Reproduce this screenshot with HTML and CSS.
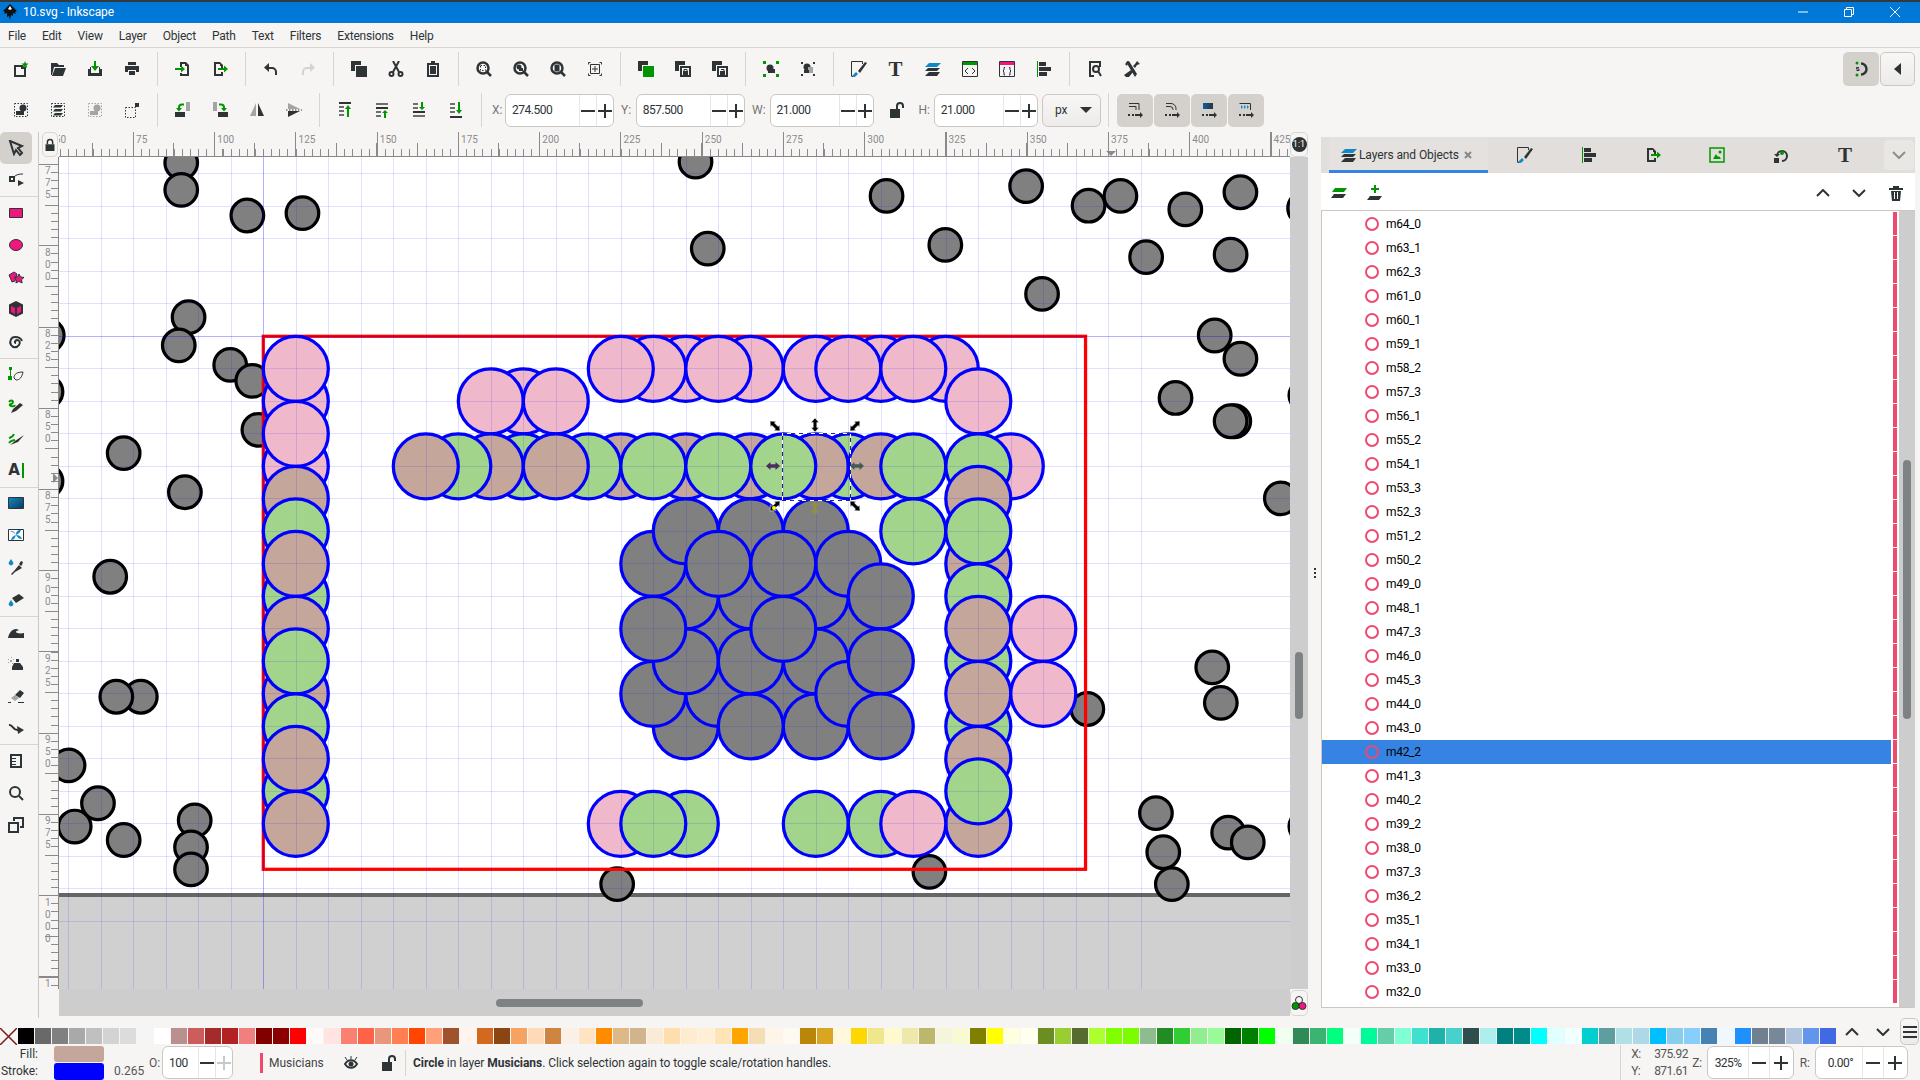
FILE: index.html
```html
<!DOCTYPE html>
<html lang="en">
<head>
  <meta charset="UTF-8" />
  <title>10.svg - Inkscape</title>
  <link rel="stylesheet" href="styles.css">
</head>
<body>
  <header class="titlebar">
    <svg class="app-logo" viewBox="0 0 16 16"><path d="M8 0 15 7l-2 1 1 2-3-1v3l-2-1-1 5-1-4-2 1V9L2 10l1-2-2-1z"/><path class="white" d="M8 2 6 5l2 1 2-1z"/></svg>
    <span class="app-title">10.svg - Inkscape</span>
    <div class="win-btns">
      <svg viewBox="0 0 12 12"><path class="win" d="M1 6h10"/></svg>
      <svg viewBox="0 0 12 12"><path class="win" d="M1.500 3.500h7v7h-7zM3.500 3.500v-2h7v7h-2"/></svg>
      <svg viewBox="0 0 12 12"><path class="win" d="M1 1l10 10M11 1 1 11"/></svg>
    </div>
  </header>

  <nav class="menubar">
    <span>File</span><span>Edit</span><span>View</span><span>Layer</span><span>Object</span><span>Path</span><span>Text</span><span>Filters</span><span>Extensions</span><span>Help</span>
  </nav>

  <section class="toolrows">
    <div class="toolrows-left">
      <div class="toolbar toolbar-main">
        <div class="btn"><svg viewBox="0 0 16 16"><path class="ol" d="M2 5h7v2h3v8H2z"/><path class="gr" d="M12 0l1 2.400 2.600.2-2 1.700.7 2.600-2.300-1.400-2.300 1.400.7-2.600-2-1.700 2.600-.2z"/></svg></div>
        <div class="btn"><svg viewBox="0 0 16 16"><path d="M1 2h6l2 2h5v2H4l-2 8H1z"/><path d="M5 7h11l-3 8H2z"/></svg></div>
        <div class="btn"><svg viewBox="0 0 16 16"><path d="M1 8h3v4h8V8h3v7H1zM3 6h1v2H3zM12 6h1v2h-1z"/><path class="gr" d="M7 0h2v5h3L8 10 4 5h3z"/></svg></div>
        <div class="btn"><svg viewBox="0 0 16 16"><path d="M4 1h8v3H4zM1 5h14v6h-3V9H4v2H1zM5 10h6v4H5z"/></svg></div>
        <i class="sep"></i>
        <div class="btn"><svg viewBox="0 0 16 16"><path d="M5 1h6l3 3v11H5v-3h2v1h5V5h-2V3H7v3H5z"/><path class="gr" d="M0 7h6V4.500L10 8l-4 3.500V9H0z"/></svg></div>
        <div class="btn"><svg viewBox="0 0 16 16"><path d="M2 1h6l3 3v3H9V5H8V3H4v10h5v-2h2v4H2z"/><path class="gr" d="M6 7h6V4.500L16 8l-4 3.500V9H6z"/></svg></div>
        <i class="sep"></i>
        <div class="btn"><svg viewBox="0 0 16 16"><path d="M6 2 1 6.500 6 11V8h3a3 3 0 0 1 3 3v3h2v-3a5 5 0 0 0-5-5H6z"/></svg></div>
        <div class="btn"><svg viewBox="0 0 16 16"><path class="off" d="M10 2l5 4.500L10 11V8H7a3 3 0 0 0-3 3v3H2v-3a5 5 0 0 1 5-5h3z"/></svg></div>
        <i class="sep"></i>
        <div class="btn"><svg viewBox="0 0 16 16"><path d="M0 0h10v4H4v6H0z"/><path d="M5 5h11v11H5z"/></svg></div>
        <div class="btn"><svg viewBox="0 0 16 16"><circle class="ol" cx="3.500" cy="13" r="2"/><circle class="ol" cx="12.500" cy="13" r="2"/><path class="ol" d="M5 11 11 0M11 11 5 0"/></svg></div>
        <div class="btn"><svg viewBox="0 0 16 16"><path class="ol" d="M3 3h10v12H3z"/><path d="M6 0h4v3H6zM5 5h6v8H5z"/></svg></div>
        <i class="sep"></i>
        <div class="btn"><svg viewBox="0 0 16 16"><circle class="ol3" cx="7" cy="7" r="5.500"/><path class="ol3" d="M11 11l4 4"/><path class="dot" d="M4.500 4.500h5v5h-5z"/></svg></div>
        <div class="btn"><svg viewBox="0 0 16 16"><circle class="ol3" cx="7" cy="7" r="5.500"/><path class="ol3" d="M11 11l4 4"/><circle cx="6" cy="6" r="2.500"/><path d="M6 7h4v3H6z"/></svg></div>
        <div class="btn"><svg viewBox="0 0 16 16"><circle class="ol3" cx="7" cy="7" r="5.500"/><path class="ol3" d="M11 11l4 4"/><path d="M4.500 3.500h5v7h-5z"/></svg></div>
        <div class="btn"><svg viewBox="0 0 16 16"><path class="ol1" d="M1.500 3.500v-2h2M12.500 1.500h2v2M14.500 12.500v2h-2M3.500 14.500h-2v-2M3.500 3.500h9v9h-9zM8 5v6M5 8h6"/></svg></div>
        <i class="sep"></i>
        <div class="btn"><svg viewBox="0 0 16 16"><path d="M0 0h10v4H4v6H0z"/><path class="gr" d="M5 5h11v11H5z"/></svg></div>
        <div class="btn"><svg viewBox="0 0 16 16"><path d="M0 0h10v4H4v6H0z"/><path class="ol" d="M6 6h9v9H6z"/><path d="M8 10h5v4H8z"/><path class="ol1" d="M9 10V8.500h3V10"/></svg></div>
        <div class="btn"><svg viewBox="0 0 16 16"><path d="M0 0h10v4H4v6H0z"/><path class="ol" d="M6 6h9v9H6z"/><path d="M8 10h5v4H8z"/><path class="ol1" d="M12 10V8.500H9"/></svg></div>
        <i class="sep"></i>
        <div class="btn"><svg viewBox="0 0 16 16"><path class="gr" d="M0 0h3v3H0zM13 0h3v3h-3zM0 13h3v3H0zM13 13h3v3h-3z"/><circle cx="7" cy="7" r="3.500"/><path d="M5 8h7v4H5z"/></svg></div>
        <div class="btn"><svg viewBox="0 0 16 16"><path d="M1 1h2v2H1zM13 1h2v2h-2zM1 13h2v2H1zM13 13h2v2h-2z"/><circle cx="7" cy="6" r="3.500"/><path class="gy" d="M8 6h5v6H8z"/><path d="M4 9h5v3H4z"/></svg></div>
        <i class="sep"></i>
        <div class="btn"><svg viewBox="0 0 16 16"><path class="ol1" d="M.500 15V.500h11V3M.500 15.500h2"/><path class="bl" d="M5 11l2 2-3 3-3-1z"/><path d="M7 10l7-9 2 1-7 10z"/></svg></div>
        <div class="btn"><span class="glyph-t">T</span></div>
        <div class="btn"><svg viewBox="0 0 16 16"><path class="bl" d="M4 2h12l-4 4H0z"/><path d="M3 7h12l-3 3H0z"/><path d="M4 11h11l-3 4H0z"/></svg></div>
        <div class="btn"><svg viewBox="0 0 16 16"><path class="ol1" d="M.500.500h15v15H.500z"/><path class="gr" d="M1 1h14v3H1z"/><path class="ol1" d="M6 7 3 10l3 3M10 7l3 3-3 3"/></svg></div>
        <div class="btn"><svg viewBox="0 0 16 16"><path class="ol1" d="M.500.500h15v15H.500z"/><path class="pk" d="M1 1h14v3H1z"/><path class="ol1" d="M6 6.500H5V9l-1 1 1 1v3h1M10 6.500h1V9l1 1-1 1v3h-1"/></svg></div>
        <div class="btn"><svg viewBox="0 0 16 16"><path class="gr" d="M1 0h1v16H1z"/><path d="M3 1h7v4H3zM3 6h12v4H3zM3 11h8v4H3z"/></svg></div>
        <i class="sep"></i>
        <div class="btn"><svg viewBox="0 0 16 16"><path class="ol" d="M13 6V1H3v14h4"/><circle class="ol" cx="9" cy="8" r="3"/><path class="ol" d="M11 10l3 5"/></svg></div>
        <div class="btn"><svg viewBox="0 0 16 16"><path d="M2 1 5 0l8 13-2 3zM1 3l3-3-1 5z"/><path d="M13 0l3 3-3 1-2 3-2-2 2-2zM7 9l2 2-4 5H2l-2-2z"/></svg></div>
      </div>

      <div class="toolbar toolbar-props">
        <div class="btn"><svg viewBox="0 0 16 16"><path class="dot" d="M1.500 1.500h13v13h-13z"/><circle cx="10" cy="6" r="3.500"/><path d="M3 9h8v4H3z"/></svg></div>
        <div class="btn"><svg viewBox="0 0 16 16"><path class="dot" d="M1.500 1.500h13v13h-13z"/><path d="M5 3h8l-2 2.500H3zM5 7h8l-2 2.500H3zM5 11h8l-2 2.500H3z"/></svg></div>
        <div class="btn"><svg viewBox="0 0 16 16"><path class="dot gyln" d="M1.500 1.500h13v13h-13z"/><circle class="gy" cx="10" cy="6" r="3.500"/><path class="gy" d="M3 9h8v4H3z"/></svg></div>
        <div class="btn"><svg viewBox="0 0 16 16"><path class="dot" d="M1.500 5.500h10v10h-10z"/><path d="M11 1h4v4h-4z"/></svg></div>
        <i class="sep"></i>
        <div class="btn"><svg viewBox="0 0 16 16"><path d="M0 10h10v5H0z"/><path class="gy" d="M11 0h4v9h-4z"/><path class="grl" d="M9 2.500H7a3 3 0 0 0-3 3V7"/><path class="gr" d="M1 6h6L4 9.500z"/></svg></div>
        <div class="btn"><svg viewBox="0 0 16 16"><path d="M6 10h10v5H6z"/><path class="gy" d="M1 0h4v9H1z"/><path class="grl" d="M7 2.500h2a3 3 0 0 1 3 3V7"/><path class="gr" d="M15 6H9l3 3.500z"/></svg></div>
        <div class="btn"><svg viewBox="0 0 16 16"><path class="gy" d="M7 1v13H1z"/><path d="M9 1v13h6z"/></svg></div>
        <div class="btn"><svg viewBox="0 0 16 16"><path class="gy" d="M2 1v6h12z"/><path d="M2 9v6l12-6z"/><path class="dot" d="M0 8h16"/></svg></div>
        <i class="sep"></i>
        <div class="btn"><svg viewBox="0 0 16 16"><path d="M2 0h12v2H2z"/><path class="gy2" d="M2 4h5v2H2zM2 8h5v2H2zM2 12h5v2H2z"/><path class="gr" d="M10 15V7H8l3-4 3 4h-2v8z"/></svg></div>
        <div class="btn"><svg viewBox="0 0 16 16"><path class="gy2" d="M2 1h12v2H2z"/><path d="M2 5h12v2H2z"/><path class="gy2" d="M2 9h5v2H2zM2 13h5v2H2z"/><path class="gr" d="M10 16V11H8l3-3 3 3h-2v5z"/></svg></div>
        <div class="btn"><svg viewBox="0 0 16 16"><path class="gy2" d="M2 1h5v2H2zM2 5h5v2H2z"/><path d="M2 9h12v2H2z"/><path class="gy2" d="M2 13h12v2H2z"/><path class="gr" d="M10 0v5H8l3 3 3-3h-2V0z"/></svg></div>
        <div class="btn"><svg viewBox="0 0 16 16"><path class="gy2" d="M2 1h5v2H2zM2 5h5v2H2zM2 9h5v2H2z"/><path d="M2 14h12v2H2z"/><path class="gr" d="M10 0v8H8l3 4 3-4h-2V0z"/></svg></div>
        <i class="sep"></i>
        <label class="field-label field-x">X:</label>
        <div class="spin spin-x"><span class="spin-val">274.500</span><i class="spin-minus"></i><i class="spin-plus"></i></div>
        <label class="field-label field-y">Y:</label>
        <div class="spin spin-y"><span class="spin-val">857.500</span><i class="spin-minus"></i><i class="spin-plus"></i></div>
        <label class="field-label field-w">W:</label>
        <div class="spin spin-w"><span class="spin-val">21.000</span><i class="spin-minus"></i><i class="spin-plus"></i></div>
        <svg class="wh-lock" viewBox="0 0 16 16"><path d="M1 7h10v9H1z"/><path class="ol" d="M8 7V4a3 3 0 0 1 6 0v2"/></svg>
        <label class="field-label field-h">H:</label>
        <div class="spin spin-h"><span class="spin-val">21.000</span><i class="spin-minus"></i><i class="spin-plus"></i></div>
        <div class="unit-select"><span>px</span><svg viewBox="0 0 12 6"><path d="M0 0h12L6 6z"/></svg></div>
        <i class="sep sep-snap"></i>
        <div class="btn-on"><svg viewBox="0 0 16 16"><path class="ol1" d="M2 1.500h10V8M2 4.500h7V8"/><path d="M1 12h2v2H1zM5 12h2v2H5zM8 12h5v-2l3 3-3 3v-2H8z"/></svg></div>
        <div class="btn-on"><svg viewBox="0 0 16 16"><path class="ol1" d="M2 1.500h5a5 5 0 0 1 5 5V8M2 4.500h4a3 3 0 0 1 3 3V8"/><path d="M1 12h2v2H1zM5 12h2v2H5zM8 12h5v-2l3 3-3 3v-2H8z"/></svg></div>
        <div class="btn-on"><svg viewBox="0 0 16 16"><defs><linearGradient id="gradFill" x1="0" y1="0" x2="1" y2="0"><stop offset="0" stop-color="#0a5fa8"/><stop offset="1" stop-color="#2e3436"/></linearGradient></defs><path fill="url(#gradFill)" d="M2 1h10v6H2z"/><path d="M1 12h2v2H1zM5 12h2v2H5zM8 12h5v-2l3 3-3 3v-2H8z"/></svg></div>
        <div class="btn-on"><svg viewBox="0 0 16 16"><path class="ol1" d="M1.500 1.500h11V8"/><path class="bl" d="M3 3l2 2-2 2V6zM6 3l2 2-2 2V6zM9 3l2 2-2 2V6z"/><path d="M1 12h2v2H1zM5 12h2v2H5zM8 12h5v-2l3 3-3 3v-2H8z"/></svg></div>
      </div>
    </div>
    <div class="toolrows-right">
      <div class="btn-on btn-snap"><svg viewBox="0 0 16 16"><path class="ol3" d="M8 2.500a5.500 5.500 0 0 1 0 11"/><circle class="gr" cx="4" cy="2" r="1.500"/><circle class="gr" cx="4" cy="14" r="1.500"/><path class="ol1" d="M6 6.500H3.500v1.500H6v1.500H3.500"/></svg></div>
      <div class="btn-raised"><svg viewBox="0 0 16 16"><path d="M11 2v12L4 8z"/></svg></div>
    </div>
  </section>

  <main class="workspace">
    <aside class="tools">
      <div class="tool tool-on"><svg viewBox="0 0 16 16"><path class="ol" d="M2 1l12 5-4 2 4 5-2 2-4-5-2 4z"/></svg></div>
      <div class="tool"><svg viewBox="0 0 16 16"><path d="M1 4h6v6H1z"/><path class="white" d="M3 6h2v2H3z"/><path class="ol1" d="M7 4c3-2 5-2 8-2"/><path d="M10 8l6 3-6 3z"/></svg></div>
      <i class="tool-sep"></i>
      <div class="tool"><svg viewBox="0 0 16 16"><path class="pk ol1s" d="M1.500 3.500h13v9h-13z"/></svg></div>
      <div class="tool"><svg viewBox="0 0 16 16"><ellipse class="pk ol1s" cx="8" cy="8" rx="6.500" ry="5.500"/></svg></div>
      <div class="tool"><svg viewBox="0 0 16 16"><path class="pk ol1s" d="M1 6l5-3 3 2-2 7-3 1z"/><path class="pk ol1s" d="M11 5l1.500 3 3.500.4-2.500 2.400.6 3.200-3.100-1.600-3.100 1.600.6-3.200-2.500-2.400 3.500-.4z"/></svg></div>
      <div class="tool"><svg viewBox="0 0 16 16"><path d="M8 0l7 3.500v9L8 16l-7-3.500v-9z"/><path class="pk" d="M3 5l4 2v6L3 11zM9 7l4-2v6l-4 2z"/></svg></div>
      <div class="tool"><svg viewBox="0 0 16 16"><path class="ol" d="M8 9c-2 0-1-3 1-3s4 2 2 5-6 3-8 0S3 3 7 3c3 0 6 1 7 4"/></svg></div>
      <i class="tool-sep"></i>
      <div class="tool"><svg viewBox="0 0 16 16"><path class="gr" d="M0 10h4v4H0zM1 1h3v3H1zM2 4h1v6H2z"/><path class="ol1" d="M6 12c0-4 3-6 9-6-1 5-3 8-7 8z"/></svg></div>
      <div class="tool"><svg viewBox="0 0 16 16"><path class="grl" d="M1 4c3-4 6 1 2 2s3 4 4 1"/><path d="M3 15l2-4 7-6 3 2-7 6z"/></svg></div>
      <div class="tool"><svg viewBox="0 0 16 16"><path class="grl" d="M1 8c3-1 4-1 5-4M1 13c2-3 3-2 6-3"/><path d="M2 15l5-4 9-6-6 7z"/></svg></div>
      <div class="tool"><span class="glyph-a">A</span><i class="caret-bar"></i></div>
      <i class="tool-sep"></i>
      <div class="tool"><svg viewBox="0 0 16 16"><defs><linearGradient id="toolGrad" x1="0" y1="0" x2="1" y2="1"><stop offset="0" stop-color="#1189c6"/><stop offset="1" stop-color="#0b3a5c"/></linearGradient></defs><path fill="url(#toolGrad)" stroke="#2e3436" d="M.500 2.500h15v11H.500z"/></svg></div>
      <div class="tool"><svg viewBox="0 0 16 16"><path class="ol1w" d="M.500 2.500h15v11H.500z"/><path class="bl" d="M8 8C5 4 3 5 2 4c2 0 4-1 6 4 0-3 1-5 5-5-1 2-2 4-5 5 3 0 5 1 6 4-3 0-4-1-6-4-1 3-2 5-5 5 1-3 2-4 5-5z"/></svg></div>
      <div class="tool"><svg viewBox="0 0 16 16"><path class="bl" d="M3 0l2 3a2.300 2.300 0 1 1-4 0z"/><path d="M7 13l-3 3-1-1 3-3 5-6 3 3zM11 5l2-3 2 1-1 3-1 1z"/></svg></div>
      <div class="tool"><svg viewBox="0 0 16 16"><path class="bl" d="M3 9l2 3a2.300 2.300 0 1 1-4 0z"/><path d="M4 7l7-4 5 4-8 5z"/></svg></div>
      <i class="tool-sep"></i>
      <div class="tool"><svg viewBox="0 0 16 16"><path d="M0 14c1-5 4-9 8-9 2 0 3 1 3 2-1-1-3 0-3 1s4 2 8 1v5z"/></svg></div>
      <div class="tool"><svg viewBox="0 0 16 16"><path d="M6 7h6l3 4v3H4v-3zM8 3h3v3H8z"/><path class="gy" d="M0 3h1v1H0zM3 1h1v1H3zM2 4h2v2H2zM5 3h1v1H5zM0 6h1v1H0zM4 7h1v1H4z"/></svg></div>
      <div class="tool"><svg viewBox="0 0 16 16"><path d="M7 7l5-5 4 3-4 5z"/><path class="gy" d="M3 10l4-3 4 3-4 3z"/><path d="M0 14h3v1H0zM10 14h6v1h-6z"/></svg></div>
      <div class="tool"><svg viewBox="0 0 16 16"><path class="ol" d="M1 5c4-1 4 6 9 5"/><path d="M9 6l7 4-6 4z"/></svg></div>
      <i class="tool-sep"></i>
      <div class="tool"><svg viewBox="0 0 16 16"><path class="ol" d="M3 2h10v12H3z"/><path d="M3 5h5v1H3zM3 8h5v1H3zM3 11h5v1H3z"/></svg></div>
      <div class="tool"><svg viewBox="0 0 16 16"><circle class="ol" cx="7" cy="7" r="5"/><path class="ol" d="M11 11l4 4"/></svg></div>
      <div class="tool"><svg viewBox="0 0 16 16"><path class="ol" d="M1 6h9v9H1zM6 4V1h9v9h-3"/></svg></div>
    </aside>

    <div class="canvas-area">
      <div class="corner-lock"><svg viewBox="0 0 16 16"><path d="M2 7h12v9H2z"/><path class="ol" d="M4.500 7V4a3.500 3.500 0 0 1 7 0v3"/></svg></div>
      <div class="ruler-h">
        <span>50</span><span>75</span><span>100</span><span>125</span><span>150</span><span>175</span><span>200</span><span>225</span><span>250</span><span>275</span><span>300</span><span>325</span><span>350</span><span>375</span><span>400</span><span>425</span>
        <i class="ruler-mark-h"></i>
      </div>
      <div class="zoom-reset"><span>1:1</span></div>
      <div class="ruler-v">
        <span>775</span><span>800</span><span>825</span><span>850</span><span>875</span><span>900</span><span>925</span><span>950</span><span>975</span><span>1000</span><span>1025</span>
        <i class="ruler-mark-v"></i>
      </div>

      <div class="canvas">
        <svg class="drawing" viewBox="0 0 1231 832">
          <rect class="desk" width="1231" height="832"/>
          <rect class="page" width="1231" height="736"/>
          <rect class="page-edge" y="736" width="1231" height="4"/>

          <!-- loose audience dots, coords taken off the shrunk screenshot -->
          <g class="audience" transform="translate(-59 -157) scale(1.2245)">
            <circle cx="148" cy="133"/><circle cx="148" cy="155"/><circle cx="202" cy="176"/><circle cx="247" cy="174"/><circle cx="568" cy="132"/><circle cx="724" cy="160"/><circle cx="838" cy="152"/><circle cx="889" cy="168"/><circle cx="915" cy="160"/><circle cx="968" cy="171"/><circle cx="1013" cy="157"/><circle cx="1065" cy="170"/>
            <circle cx="578" cy="203"/><circle cx="772" cy="200"/><circle cx="936" cy="210"/><circle cx="1005" cy="208"/><circle cx="851" cy="240"/><circle cx="154" cy="259"/><circle cx="146" cy="282"/><circle cx="188" cy="298"/><circle cx="206" cy="311"/><circle cx="211" cy="351"/><circle cx="101" cy="370"/><circle cx="151" cy="402"/><circle cx="90" cy="471"/>
            <circle cx="115" cy="569"/><circle cx="95" cy="569"/><circle cx="56" cy="625"/><circle cx="80" cy="656"/><circle cx="61" cy="675"/><circle cx="101" cy="686"/><circle cx="159" cy="670"/><circle cx="156" cy="692"/><circle cx="156" cy="710"/>
            <circle cx="504" cy="722"/><circle cx="759" cy="712"/><circle cx="888" cy="579"/><circle cx="944" cy="664"/><circle cx="950" cy="696"/><circle cx="957" cy="722"/><circle cx="1003" cy="680"/><circle cx="1019" cy="688"/><circle cx="990" cy="545"/><circle cx="997" cy="574"/>
            <circle cx="992" cy="274"/><circle cx="1013" cy="293"/><circle cx="960" cy="325"/><circle cx="1008" cy="344"/><circle cx="1005" cy="344"/><circle cx="1046" cy="407"/><circle cx="1066" cy="323"/><circle cx="1066" cy="675"/>
            <circle cx="39" cy="274"/><circle cx="38" cy="320"/><circle cx="38" cy="393"/>
          </g>

          <rect class="stage-frame" x="204.300" y="179.300" width="822.250" height="533"/>

          <!-- musicians sit on the 10 unit grid, so cx/cy are grid steps -->
          <g class="musicians" transform="translate(204.300 179.300) scale(32.500)">
            <circle class="pink" cx="1" cy="2"/><circle class="pink" cx="1" cy="4"/><circle class="green" cx="1" cy="8"/><circle class="tan" cx="1" cy="11"/><circle class="green" cx="1" cy="14"/>
            <circle class="pink" cx="1" cy="1"/><circle class="pink" cx="1" cy="3"/><circle class="tan" cx="1" cy="5"/><circle class="green" cx="1" cy="6"/><circle class="tan" cx="1" cy="7"/><circle class="tan" cx="1" cy="9"/><circle class="green" cx="1" cy="10"/><circle class="green" cx="1" cy="12"/><circle class="tan" cx="1" cy="13"/><circle class="tan" cx="1" cy="15"/>

            <circle class="pink" cx="13" cy="1"/><circle class="pink" cx="12" cy="1"/><circle class="pink" cx="11" cy="1"/><circle class="pink" cx="15" cy="1"/><circle class="pink" cx="14" cy="1"/>
            <circle class="pink" cx="17" cy="1"/><circle class="pink" cx="19" cy="1"/><circle class="pink" cx="21" cy="1"/><circle class="pink" cx="18" cy="1"/><circle class="pink" cx="20" cy="1"/>
            <circle class="pink" cx="8" cy="2"/><circle class="pink" cx="7" cy="2"/><circle class="pink" cx="9" cy="2"/><circle class="pink" cx="22" cy="2"/>

            <circle class="green" cx="8" cy="4"/><circle class="tan" cx="7" cy="4"/><circle class="green" cx="6" cy="4"/><circle class="tan" cx="5" cy="4"/><circle class="tan" cx="11" cy="4"/><circle class="green" cx="10" cy="4"/><circle class="tan" cx="9" cy="4"/><circle class="tan" cx="13" cy="4"/><circle class="tan" cx="15" cy="4"/><circle class="green" cx="12" cy="4"/><circle class="green" cx="14" cy="4"/><circle class="green" cx="18" cy="4"/><circle class="tan" cx="17" cy="4"/><circle class="tan" cx="19" cy="4"/><circle class="green" cx="16" cy="4"/><circle class="green" cx="20" cy="4"/><circle class="green" cx="20" cy="6"/>

            <circle class="pink" cx="23" cy="4"/><circle class="green" cx="22" cy="4"/><circle class="tan" cx="22" cy="5"/><circle class="tan" cx="22" cy="7"/><circle class="green" cx="22" cy="6"/><circle class="green" cx="22" cy="8"/><circle class="green" cx="22" cy="10"/><circle class="green" cx="22" cy="12"/><circle class="tan" cx="22" cy="9"/><circle class="tan" cx="22" cy="11"/><circle class="tan" cx="22" cy="13"/><circle class="tan" cx="22" cy="15"/><circle class="green" cx="22" cy="14"/>
            <circle class="pink" cx="24" cy="9"/><circle class="pink" cx="24" cy="11"/>

            <circle class="grey" cx="14" cy="9"/><circle class="grey" cx="18" cy="9"/>
            <circle class="grey" cx="15" cy="8"/><circle class="grey" cx="17" cy="8"/><circle class="grey" cx="13" cy="8"/><circle class="grey" cx="15" cy="6"/><circle class="grey" cx="17" cy="6"/><circle class="grey" cx="12" cy="7"/><circle class="grey" cx="13" cy="6"/><circle class="grey" cx="18" cy="7"/><circle class="grey" cx="14" cy="7"/><circle class="grey" cx="16" cy="7"/>
            <circle class="grey" cx="13" cy="12"/><circle class="grey" cx="12" cy="11"/><circle class="grey" cx="16" cy="11"/><circle class="grey" cx="14" cy="11"/><circle class="grey" cx="17" cy="12"/><circle class="grey" cx="15" cy="12"/><circle class="grey" cx="13" cy="10"/><circle class="grey" cx="15" cy="10"/><circle class="grey" cx="17" cy="10"/><circle class="grey" cx="18" cy="11"/><circle class="grey" cx="12" cy="9"/><circle class="grey" cx="16" cy="9"/><circle class="grey" cx="19" cy="8"/><circle class="grey" cx="19" cy="10"/><circle class="grey" cx="19" cy="12"/>

            <circle class="pink" cx="11" cy="15"/><circle class="green" cx="13" cy="15"/><circle class="green" cx="12" cy="15"/><circle class="green" cx="17" cy="15"/><circle class="green" cx="19" cy="15"/><circle class="pink" cx="20" cy="15"/>
          </g>

          <path class="grid" d="M9.500 0V832m32.500-832V832m32.500-832V832m32.500-832V832m32.500-832V832m32.500-832V832m65-832V832m32.500-832V832m32.500-832V832m32.500-832V832m32.500-832V832m32.500-832V832m32.500-832V832m32.500-832V832m32.500-832V832m32.500-832V832m32.500-832V832m32.500-832V832m32.500-832V832m32.500-832V832m32.500-832V832m32.500-832V832m32.500-832V832m32.500-832V832m32.500-832V832m32.500-832V832m32.500-832V832m32.500-832V832m32.500-832V832m32.500-832V832m32.500-832V832m32.500-832V832m32.500-832V832"/>
          <path class="grid" d="M0 16.500H1231m-1231 32.500H1231m-1231 32.500H1231m-1231 32.500H1231m-1231 32.500H1231m-1231 65H1231m-1231 32.500H1231m-1231 32.500H1231m-1231 32.500H1231m-1231 32.500H1231m-1231 32.500H1231m-1231 32.500H1231m-1231 32.500H1231m-1231 32.500H1231m-1231 32.500H1231m-1231 32.500H1231m-1231 32.500H1231m-1231 32.500H1231m-1231 32.500H1231m-1231 32.500H1231m-1231 32.500H1231m-1231 32.500H1231m-1231 32.500H1231"/>
          <path class="grid-major" d="M204.500 0V832M0 179.500H1231"/>

          <rect class="select-white" x="723.500" y="276.500" width="68" height="67"/>
          <rect class="select-dash" x="723.500" y="276.500" width="68" height="67"/>
          <g class="handles">
            <path transform="translate(716 269) rotate(-45)" d="M0-7 4-2.500H1.800V2.500H4L0 7-4 2.500h2.200V-2.500H-4z"/>
            <path transform="translate(756 268)" d="M0-7 4-2.500H1.800V2.500H4L0 7-4 2.500h2.200V-2.500H-4z"/>
            <path transform="translate(796 269) rotate(45)" d="M0-7 4-2.500H1.800V2.500H4L0 7-4 2.500h2.200V-2.500H-4z"/>
            <path transform="translate(716 349) rotate(45)" d="M0-7 4-2.500H1.800V2.500H4L0 7-4 2.500h2.200V-2.500H-4z"/>
            <path transform="translate(796 349) rotate(-45)" d="M0-7 4-2.500H1.800V2.500H4L0 7-4 2.500h2.200V-2.500H-4z"/>
          </g>
          <g class="handles-faint">
            <path class="h-left" transform="translate(714 309) rotate(90)" d="M0-7 4-2.500H1.800V2.500H4L0 7-4 2.500h2.200V-2.500H-4z"/>
            <path class="h-right" transform="translate(798 309) rotate(90)" d="M0-7 4-2.500H1.800V2.500H4L0 7-4 2.500h2.200V-2.500H-4z"/>
            <path class="h-bottom" transform="translate(756 351)" d="M0-7 4-2.500H1.800V2.500H4L0 7-4 2.500h2.200V-2.500H-4z"/>
            <circle class="h-dot" cx="715" cy="351" r="2"/>
          </g>
        </svg>
      </div>

      <div class="scroll-v"><i></i></div>
      <div class="corner-empty"></div>
      <div class="scroll-h"><i></i></div>
      <div class="cms-btn"><svg viewBox="0 0 16 16"><circle class="ol1" cx="8" cy="5" r="3.500"/><circle class="gr ol1s" cx="4.500" cy="11" r="3.500"/><circle class="pk ol1s" cx="11.500" cy="11" r="3.500"/></svg></div>
    </div>

    <div class="dock-handle"><i></i><i></i><i></i></div>

    <section class="panel">
      <div class="tabs">
        <div class="tab-on">
          <svg viewBox="0 0 16 16"><path class="bl" d="M4 2h12l-4 4H0z"/><path d="M3 7h12l-3 3H0z"/><path d="M4 11h11l-3 4H0z"/></svg>
          <span>Layers and Objects</span>
          <svg class="tab-close" viewBox="0 0 8 8"><path d="M1 1l6 6M7 1 1 7"/></svg>
        </div>
        <div class="tab"><svg viewBox="0 0 16 16"><path class="ol1" d="M.500 15V.500h11V3M.500 15.500h2"/><path class="bl" d="M5 11l2 2-3 3-3-1z"/><path d="M7 10l7-9 2 1-7 10z"/></svg></div>
        <div class="tab"><svg viewBox="0 0 16 16"><path class="gr" d="M1 0h1v16H1z"/><path d="M3 1h7v4H3zM3 6h12v4H3zM3 11h8v4H3z"/></svg></div>
        <div class="tab"><svg viewBox="0 0 16 16"><path d="M2 1h6l3 3v3H9V5H8V3H4v10h5v-2h2v4H2z"/><path class="gr" d="M6 7h6V4.500L16 8l-4 3.500V9H6z"/></svg></div>
        <div class="tab"><svg viewBox="0 0 16 16"><path class="grln" d="M1 1h14v14H1z"/><path class="gr" d="M4 12l3-5 2 3 1-1 2 3z"/><circle class="gr" cx="11" cy="5" r="1.500"/></svg></div>
        <div class="tab"><svg viewBox="0 0 16 16"><path class="ol" d="M4 9a5 5 0 1 1 5 5"/><path d="M1 11h5v5H1zM1 7l3 3 3-3z"/><circle class="gr" cx="9" cy="6" r="2"/></svg></div>
        <div class="tab"><span class="glyph-t">T</span></div>
        <div class="tab-more"><svg viewBox="0 0 14 8"><path d="M1 1l6 6 6-6"/></svg></div>
      </div>

      <div class="panel-tools">
        <svg viewBox="0 0 16 16"><path class="gr" d="M4 3h12l-3 4H1z"/><path d="M3 9h12l-3 4H0z"/></svg>
        <svg class="ptool-new" viewBox="0 0 16 16"><path class="gr" d="M7 0h2v3h3v2H9v3H7V5H4V3h3z"/><path d="M3 11h12l-3 4H0z"/></svg>
        <span class="ptool-gap"></span>
        <svg class="chev" viewBox="0 0 14 8"><path d="M1 7l6-6 6 6"/></svg>
        <svg class="chev" viewBox="0 0 14 8"><path d="M1 1l6 6 6-6"/></svg>
        <svg viewBox="0 0 16 16"><path d="M5 1h6v2h4v2H1V3h4zM3 6h10l-1 10H4z"/><path class="white" d="M6 7h1v7H6zM9 7h1v7H9z"/></svg>
      </div>

      <div class="objects">
        <ul class="rows">
          <li><span class="row-main"><i class="ring"></i>m64_0</span><i class="mark"></i></li>
          <li><span class="row-main"><i class="ring"></i>m63_1</span><i class="mark"></i></li>
          <li><span class="row-main"><i class="ring"></i>m62_3</span><i class="mark"></i></li>
          <li><span class="row-main"><i class="ring"></i>m61_0</span><i class="mark"></i></li>
          <li><span class="row-main"><i class="ring"></i>m60_1</span><i class="mark"></i></li>
          <li><span class="row-main"><i class="ring"></i>m59_1</span><i class="mark"></i></li>
          <li><span class="row-main"><i class="ring"></i>m58_2</span><i class="mark"></i></li>
          <li><span class="row-main"><i class="ring"></i>m57_3</span><i class="mark"></i></li>
          <li><span class="row-main"><i class="ring"></i>m56_1</span><i class="mark"></i></li>
          <li><span class="row-main"><i class="ring"></i>m55_2</span><i class="mark"></i></li>
          <li><span class="row-main"><i class="ring"></i>m54_1</span><i class="mark"></i></li>
          <li><span class="row-main"><i class="ring"></i>m53_3</span><i class="mark"></i></li>
          <li><span class="row-main"><i class="ring"></i>m52_3</span><i class="mark"></i></li>
          <li><span class="row-main"><i class="ring"></i>m51_2</span><i class="mark"></i></li>
          <li><span class="row-main"><i class="ring"></i>m50_2</span><i class="mark"></i></li>
          <li><span class="row-main"><i class="ring"></i>m49_0</span><i class="mark"></i></li>
          <li><span class="row-main"><i class="ring"></i>m48_1</span><i class="mark"></i></li>
          <li><span class="row-main"><i class="ring"></i>m47_3</span><i class="mark"></i></li>
          <li><span class="row-main"><i class="ring"></i>m46_0</span><i class="mark"></i></li>
          <li><span class="row-main"><i class="ring"></i>m45_3</span><i class="mark"></i></li>
          <li><span class="row-main"><i class="ring"></i>m44_0</span><i class="mark"></i></li>
          <li><span class="row-main"><i class="ring"></i>m43_0</span><i class="mark"></i></li>
          <li><span class="row-main row-selected"><i class="ring"></i>m42_2</span><i class="mark"></i></li>
          <li><span class="row-main"><i class="ring"></i>m41_3</span><i class="mark"></i></li>
          <li><span class="row-main"><i class="ring"></i>m40_2</span><i class="mark"></i></li>
          <li><span class="row-main"><i class="ring"></i>m39_2</span><i class="mark"></i></li>
          <li><span class="row-main"><i class="ring"></i>m38_0</span><i class="mark"></i></li>
          <li><span class="row-main"><i class="ring"></i>m37_3</span><i class="mark"></i></li>
          <li><span class="row-main"><i class="ring"></i>m36_2</span><i class="mark"></i></li>
          <li><span class="row-main"><i class="ring"></i>m35_1</span><i class="mark"></i></li>
          <li><span class="row-main"><i class="ring"></i>m34_1</span><i class="mark"></i></li>
          <li><span class="row-main"><i class="ring"></i>m33_0</span><i class="mark"></i></li>
          <li><span class="row-main"><i class="ring"></i>m32_0</span><i class="mark"></i></li>
        </ul>
        <div class="list-scroll"><i></i></div>
      </div>
    </section>
  </main>

  <div class="palette">
    <svg class="no-paint" viewBox="0 0 17 17"><path d="M0 0l17 17M17 0 0 17"/></svg>
    <div class="swatches">
      <b style="background:#000000"></b><b style="background:#696969"></b><b style="background:#808080"></b><b style="background:#a9a9a9"></b><b style="background:#c0c0c0"></b><b style="background:#d3d3d3"></b><b style="background:#dcdcdc"></b><b style="background:#f5f5f5"></b><b style="background:#ffffff"></b><b style="background:#bc8f8f"></b><b style="background:#cd5c5c"></b><b style="background:#a52a2a"></b><b style="background:#b22222"></b><b style="background:#f08080"></b><b style="background:#800000"></b><b style="background:#8b0000"></b><b style="background:#ff0000"></b><b style="background:#fffafa"></b><b style="background:#ffe4e1"></b><b style="background:#fa8072"></b><b style="background:#ff6347"></b><b style="background:#e9967a"></b><b style="background:#ff7f50"></b><b style="background:#ff4500"></b><b style="background:#ffa07a"></b><b style="background:#a0522d"></b><b style="background:#fff5ee"></b><b style="background:#d2691e"></b><b style="background:#8b4513"></b><b style="background:#f4a460"></b><b style="background:#ffdab9"></b><b style="background:#cd853f"></b><b style="background:#faf0e6"></b><b style="background:#ffe4c4"></b><b style="background:#ff8c00"></b><b style="background:#deb887"></b><b style="background:#d2b48c"></b><b style="background:#faebd7"></b><b style="background:#ffdead"></b><b style="background:#ffebcd"></b><b style="background:#ffefd5"></b><b style="background:#ffe4b5"></b><b style="background:#ffa500"></b><b style="background:#f5deb3"></b><b style="background:#fdf5e6"></b><b style="background:#fffaf0"></b><b style="background:#b8860b"></b><b style="background:#daa520"></b><b style="background:#fff8dc"></b><b style="background:#ffd700"></b><b style="background:#f0e68c"></b><b style="background:#fffacd"></b><b style="background:#eee8aa"></b><b style="background:#bdb76b"></b><b style="background:#f5f5dc"></b><b style="background:#fafad2"></b><b style="background:#808000"></b><b style="background:#ffff00"></b><b style="background:#ffffe0"></b><b style="background:#fffff0"></b><b style="background:#6b8e23"></b><b style="background:#9acd32"></b><b style="background:#556b2f"></b><b style="background:#adff2f"></b><b style="background:#7fff00"></b><b style="background:#7cfc00"></b><b style="background:#8fbc8f"></b><b style="background:#228b22"></b><b style="background:#32cd32"></b><b style="background:#90ee90"></b><b style="background:#98fb98"></b><b style="background:#006400"></b><b style="background:#008000"></b><b style="background:#00ff00"></b><b style="background:#f0fff0"></b><b style="background:#2e8b57"></b><b style="background:#3cb371"></b><b style="background:#00ff7f"></b><b style="background:#f5fffa"></b><b style="background:#00fa9a"></b><b style="background:#66cdaa"></b><b style="background:#7fffd4"></b><b style="background:#40e0d0"></b><b style="background:#20b2aa"></b><b style="background:#48d1cc"></b><b style="background:#2f4f4f"></b><b style="background:#afeeee"></b><b style="background:#008080"></b><b style="background:#008b8b"></b><b style="background:#00ffff"></b><b style="background:#e0ffff"></b><b style="background:#f0ffff"></b><b style="background:#00ced1"></b><b style="background:#5f9ea0"></b><b style="background:#b0e0e6"></b><b style="background:#add8e6"></b><b style="background:#00bfff"></b><b style="background:#87ceeb"></b><b style="background:#87cefa"></b><b style="background:#4682b4"></b><b style="background:#f0f8ff"></b><b style="background:#1e90ff"></b><b style="background:#708090"></b><b style="background:#778899"></b><b style="background:#b0c4de"></b><b style="background:#6495ed"></b><b style="background:#4169e1"></b>
    </div>
    <svg class="chev pal-up" viewBox="0 0 14 8"><path d="M1 7l6-6 6 6"/></svg>
    <svg class="chev pal-down" viewBox="0 0 14 8"><path d="M1 1l6 6 6-6"/></svg>
    <div class="pal-menu"><i></i><i></i><i></i></div>
  </div>

  <footer class="statusbar">
    <div class="style-box">
      <span class="style-label">Fill:</span><span class="fill-swatch"></span>
      <span class="style-label">Stroke:</span><span class="stroke-swatch"></span>
    </div>
    <span class="stroke-width">0.265</span>
    <span class="status-o">O:</span>
    <div class="spin spin-o"><span class="spin-val">100</span><i class="spin-minus"></i><i class="spin-plus spin-off"></i></div>
    <i class="layer-bar"></i>
    <span class="layer-name">Musicians</span>
    <svg class="eye" viewBox="0 0 16 16"><path class="ol" d="M2 9c3-5 9-5 12 0-3 5-9 5-12 0z"/><circle cx="8" cy="9" r="2.500"/><path class="ol1" d="M2 2l2 3M14 2l-2 3M8 1v3"/></svg>
    <svg class="layer-lock" viewBox="0 0 16 16"><path d="M1 7h10v9H1z"/><path class="ol" d="M8 7V4a3 3 0 0 1 6 0v2"/></svg>
    <i class="status-sep"></i>
    <p class="message"><b>Circle</b> in layer <b>Musicians</b>. Click selection again to toggle scale/rotation handles.</p>
    <i class="status-sep coords-sep"></i>
    <div class="coords">
      <span>X:</span><span>375.92</span>
      <span>Y:</span><span>871.61</span>
    </div>
    <span class="status-z">Z:</span>
    <div class="spin spin-z"><span class="spin-val">325%</span><i class="spin-minus"></i><i class="spin-plus"></i></div>
    <span class="status-r">R:</span>
    <div class="spin spin-r"><span class="spin-val">0.00°</span><i class="spin-minus"></i><i class="spin-plus"></i></div>
  </footer>
</body>
</html>
```

FILE: styles.css
```css
* {
  box-sizing: border-box;
}
html, body {
  margin: 0;
  height: 100%;
}
body {
  width: 1920px;
  height: 1080px;
  overflow: hidden;
  background: #f6f5f4;
  color: #2e3436;
  font-family: Roboto, "Noto Sans", sans-serif;
  font-size: 12px;
  display: flex;
  flex-direction: column;
}
i {
  display: block;
  font-style: normal;
}
svg {
  display: block;
  fill: #2e3436;
  flex: none;
}

/* shared icon paints */
.gr { fill: #009600; }
.pk { fill: #f0157f; }
.bl { fill: #1189c6; }
.gy { fill: #a4a4a4; }
.gy2 { fill: #6d6f70; }
.white { fill: #fff; }
.off { fill: #d3d3d3; }
.ol { fill: none; stroke: #2e3436; stroke-width: 2; }
.ol1 { fill: none; stroke: #2e3436; stroke-width: 1; }
.ol3 { fill: none; stroke: #2e3436; stroke-width: 2.500; }
.ol1w { fill: #fff; stroke: #2e3436; stroke-width: 1; }
.ol1s { stroke: #2e3436; stroke-width: 1; }
.grl { fill: none; stroke: #009600; stroke-width: 2; }
.grln { fill: none; stroke: #009600; stroke-width: 1.500; }
.dot { fill: none; stroke: #2e3436; stroke-width: 1; stroke-dasharray: 1.500 1.500; }
.gyln { stroke: #a4a4a4; }
.glyph-t {
  font-family: "Liberation Serif", serif;
  font-weight: bold;
  font-size: 21px;
  line-height: 1;
  color: #2e3436;
}
.glyph-a {
  font-family: "DejaVu Sans", sans-serif;
  font-weight: bold;
  font-size: 15px;
  color: #2e3436;
}

/* title + menu */
.titlebar {
  height: 23px;
  flex: none;
  border-top: 2px solid #33393d;
  background: #0078d7;
  color: #fff;
  display: flex;
  align-items: center;
  padding-bottom: 2px;
}
.app-logo {
  width: 16px;
  height: 16px;
  margin-left: 2px;
  fill: #111;
}
.app-title {
  margin-left: 5px;
  font-size: 12px;
  letter-spacing: -.1px;
}
.win-btns {
  margin-left: auto;
  display: flex;
  gap: 34px;
  padding-right: 19px;
}
.win-btns svg {
  width: 12px;
  height: 12px;
}
.win {
  fill: none;
  stroke: #fff;
  stroke-width: 1;
}
.menubar {
  height: 25px;
  flex: none;
  display: flex;
  align-items: center;
  padding: 2px 0 0 8px;
  gap: 16px;
  letter-spacing: -.2px;
  border-bottom: 1px solid #d8d5d1;
}

/* toolbars */
.toolrows {
  height: 84px;
  flex: none;
  display: flex;
  justify-content: space-between;
}
.toolbar {
  display: flex;
  align-items: center;
  padding-left: 2px;
}
.toolbar-main {
  height: 42px;
}
.toolbar-props {
  height: 40px;
}
.btn {
  width: 37px;
  height: 33px;
  display: flex;
  align-items: center;
  justify-content: center;
}
.btn svg {
  width: 16px;
  height: 16px;
}
.sep {
  width: 1px;
  height: 34px;
  margin: 0 6.500px;
  background: #d8d5d1;
}
.btn-on {
  width: 36px;
  height: 33px;
  margin-right: 1px;
  background: #d4d0cc;
  border-radius: 5px;
  display: flex;
  align-items: center;
  justify-content: center;
}
.btn-on svg {
  width: 16px;
  height: 16px;
}
.sep-snap {
  margin: 0 8px 0 7.500px;
}
.toolrows-right {
  display: flex;
  padding: 4px 5px 0 0;
  gap: 1px;
  height: 38px;
}
.btn-snap {
  margin: 0;
  height: 34px;
}
.btn-raised {
  width: 35px;
  height: 34px;
  border: 1px solid #cdc7c2;
  border-radius: 5px;
  background: linear-gradient(#f8f7f6, #edebe9);
  display: flex;
  align-items: center;
  justify-content: center;
}
.btn-raised svg {
  width: 16px;
  height: 16px;
}

/* spin inputs */
.spin {
  height: 33px;
  background: #fff;
  border: 1px solid #cdc7c2;
  border-radius: 6px;
  display: flex;
  align-items: stretch;
  flex: none;
}
.spin-val {
  flex: 1;
  display: flex;
  align-items: center;
  padding-left: 6px;
  letter-spacing: -.5px;
}
.spin-minus,
.spin-plus {
  width: 17px;
  position: relative;
  border-left: 1px solid #e8e6e3;
}
.spin-minus::before,
.spin-plus::before,
.spin-plus::after {
  content: "";
  position: absolute;
  background: #2e3436;
  left: 1px;
  top: 15px;
  width: 14px;
  height: 2px;
}
.spin-plus::after {
  left: 7px;
  top: 9px;
  width: 2px;
  height: 14px;
}
.spin-off::before,
.spin-off::after {
  background: #c6c8c9;
}
.field-label {
  color: #777;
  flex: none;
}
.field-x { margin-left: 4px; width: 13px; }
.field-y { margin-left: 7px; width: 14.700px; }
.field-w { margin-left: 7.300px; width: 17.600px; }
.field-h { margin-left: 13.600px; width: 15.100px; }
.spin-x, .spin-y { width: 109px; }
.spin-w, .spin-h { width: 104px; }
.wh-lock {
  width: 16px;
  height: 16px;
  margin-left: 15.400px;
}
.unit-select {
  width: 59px;
  height: 33px;
  margin-left: 4.300px;
  border: 1px solid #cdc7c2;
  border-radius: 6px;
  background: linear-gradient(#f8f7f6, #edebe9);
  display: flex;
  align-items: center;
  padding-left: 12px;
  gap: 12px;
}
.unit-select svg {
  width: 12px;
  height: 6px;
}

/* main area */
.workspace {
  height: 886px;
  flex: none;
  display: flex;
}
.tools {
  width: 39px;
  flex: none;
  border-right: 1px solid #cdc7c2;
  display: flex;
  flex-direction: column;
}
.tool {
  height: 32.240px;
  width: 32px;
  flex: none;
  display: flex;
  align-items: center;
  justify-content: center;
  gap: 2px;
}
.tool svg {
  width: 16px;
  height: 16px;
}
.tool-on {
  background: #d4d0cc;
  border-radius: 5px;
}
.tool-sep {
  height: 1px;
  margin-bottom: -1px;
  background: #d8d5d1;
  flex: none;
}
.caret-bar {
  width: 2px;
  height: 15px;
  background: #009600;
}
.canvas-area {
  width: 1269px;
  flex: none;
  display: grid;
  grid-template-columns: 20px 1231px 18px;
  grid-template-rows: 25px 832px 27px;
}
.corner-lock {
  margin: 0 1px 0 3px;
  background: #f6f5f4;
  border: 1px solid #d8d5d1;
  border-radius: 5px;
  display: flex;
  align-items: center;
  justify-content: center;
}
.corner-lock svg {
  width: 12px;
  height: 14px;
}
.ruler-h {
  position: relative;
  overflow: hidden;
  display: flex;
  padding-left: 0;
  border-bottom: 1px solid #888;
  color: #8c8c8c;
  font-size: 10px;
  background:
    repeating-linear-gradient(90deg, transparent 0 74px, #8a8a8a 74px 75px, transparent 75px 81.250px) 0 100%/100% 25px no-repeat,
    repeating-linear-gradient(90deg, transparent 0 33px, #8a8a8a 33px 34px, transparent 34px 40.625px) 0 100%/100% 13px no-repeat,
    repeating-linear-gradient(90deg, transparent 0 1px, #8a8a8a 1px 2px, transparent 2px 8.125px) 0 100%/100% 7px no-repeat;
}
.ruler-h span {
  flex: none;
  width: 81.250px;
  padding-left: 3px;
  line-height: 15px;
}
.ruler-h span:first-child {
  margin-left: -7.200px;
}
.ruler-mark-h {
  position: absolute;
  left: 1047px;
  bottom: 0;
  border: 5px solid transparent;
  border-top: 5px solid #8a8a8a;
  border-bottom: 0;
}
.zoom-reset {
  background: #f6f5f4;
  border: 1px solid #d8d5d1;
  border-radius: 5px;
  display: flex;
  align-items: center;
  justify-content: center;
}
.zoom-reset span {
  width: 15px;
  height: 15px;
  border-radius: 50%;
  background: #2e3436;
  color: #fff;
  font-size: 9px;
  line-height: 15px;
  text-align: center;
}
.ruler-v {
  position: relative;
  overflow: hidden;
  color: #8c8c8c;
  font-size: 10px;
  padding-top: 7.400px;
  background:
    repeating-linear-gradient(180deg, transparent 0 7px, #8a8a8a 7px 8px, transparent 8px 81.250px) 100% 0/100% 100% no-repeat,
    repeating-linear-gradient(180deg, transparent 0 7px, #8a8a8a 7px 8px, transparent 8px 40.625px) 100% 0/13px 100% no-repeat,
    repeating-linear-gradient(180deg, transparent 0 7px, #8a8a8a 7px 8px, transparent 8px 8.125px) 100% 0/7px 100% no-repeat;
  border-right: 1px solid #888;
}
.ruler-v span {
  display: block;
  height: 81.250px;
  width: 7px;
  margin-left: 6px;
  padding-top: 1px;
  line-height: 12px;
  word-break: break-all;
}
.ruler-mark-v {
  position: absolute;
  right: 0;
  top: 316px;
  border: 5px solid transparent;
  border-left: 5px solid #8a8a8a;
  border-right: 0;
}
.canvas {
  overflow: hidden;
}
.drawing {
  width: 1231px;
  height: 832px;
}
.desk { fill: #d0d0d0; }
.page { fill: #fff; }
.page-edge { fill: #666; }
.audience circle {
  r: 13.300px;
  fill: #808080;
  stroke: #000;
  stroke-width: 2.650px;
}
.stage-frame {
  fill: none;
  stroke: #ff0000;
  stroke-width: 3.250px;
}
.musicians circle {
  r: 1px;
  stroke: #0000ff;
  stroke-width: .1px;
}
.pink { fill: #f0b8cb; }
.green { fill: #a3d48c; }
.tan { fill: #c4a69a; }
.grey { fill: #808080; }
.grid {
  fill: none;
  stroke: #0000ff;
  stroke-opacity: .12;
  stroke-width: 1;
  shape-rendering: crispEdges;
}
.grid-major {
  fill: none;
  stroke: #0000ff;
  stroke-opacity: .3;
  stroke-width: 1;
  shape-rendering: crispEdges;
}
.select-white {
  fill: none;
  stroke: #fff;
  stroke-width: 1;
  shape-rendering: crispEdges;
}
.select-dash {
  fill: none;
  stroke: #20209a;
  stroke-width: 1;
  stroke-dasharray: 4 4;
  shape-rendering: crispEdges;
}
.handles path {
  fill: #000;
  stroke: #fff;
  stroke-width: .5;
}
.h-left { fill: #4a2f5e; }
.h-right { fill: #3f5d55; }
.h-bottom { fill: #8f8f45; }
.h-dot { fill: #ffff00; }
.scroll-v {
  background: #cdcdcd;
  padding: 495px 0 0 5px;
}
.scroll-v i {
  width: 8px;
  height: 67px;
  border-radius: 4px;
  background: #7e8282;
}
.scroll-h {
  background: #cdcdcd;
  padding: 10px 0 0 437px;
}
.scroll-h i {
  width: 147px;
  height: 8px;
  border-radius: 4px;
  background: #7e8282;
}
.cms-btn {
  height: 26px;
  margin-top: 1px;
  background: #f6f5f4;
  border: 1px solid #d8d5d1;
  border-radius: 5px;
  display: flex;
  align-items: center;
  justify-content: center;
}
.cms-btn svg {
  width: 16px;
  height: 16px;
}
.dock-handle {
  width: 13px;
  flex: none;
  display: flex;
  flex-direction: column;
  justify-content: center;
  align-items: center;
  gap: 2px;
  padding-bottom: 4px;
}
.dock-handle i {
  width: 2px;
  height: 2px;
  background: #2e3436;
}

/* dock panel */
.panel {
  width: 594px;
  flex: none;
  padding-top: 5px;
  display: flex;
  flex-direction: column;
}
.tabs {
  height: 36px;
  flex: none;
  background: #e1dedb;
  padding-left: 8px;
  display: flex;
  align-items: center;
}
.tab-on {
  width: 159px;
  height: 36px;
  flex: none;
  background: #e4e1de;
  border-bottom: 3px solid #3584e4;
  display: flex;
  align-items: center;
  padding: 2px 0 0 12px;
  color: #2e3436;
  letter-spacing: -.1px;
}
.tab-on svg {
  width: 16px;
  height: 16px;
}
.tab-on span {
  margin-left: 2px;
}
.tab-on .tab-close {
  width: 8px;
  height: 8px;
  margin-left: 5px;
}
.tab-close path {
  stroke: #888;
  stroke-width: 2;
  fill: none;
}
.tab {
  width: 64px;
  flex: none;
  display: flex;
  justify-content: center;
}
.tab svg {
  width: 16px;
  height: 16px;
}
.tabs .tab:nth-child(2) {
  margin-left: 5px;
}
.tab-more {
  width: 30px;
  height: 30px;
  flex: none;
  margin-left: auto;
  margin-right: 1px;
  background: #e9e7e4;
  border-radius: 4px;
  display: flex;
  align-items: center;
  justify-content: center;
}
.tab-more svg {
  width: 14px;
  height: 8px;
}
.tab-more path {
  fill: none;
  stroke: #8c8f90;
  stroke-width: 2;
}
.panel-tools {
  height: 37px;
  flex: none;
  background: #fff;
  display: flex;
  align-items: center;
  padding: 3px 11px 0 10px;
}
.panel-tools svg {
  width: 16px;
  height: 16px;
}
.ptool-new {
  margin-left: 20px;
}
.ptool-gap {
  flex: 1;
}
.chev {
  width: 14px;
  height: 8px;
  fill: none;
}
.chev path {
  fill: none;
  stroke: #2e3436;
  stroke-width: 2;
}
.panel-tools .chev {
  width: 14px;
  height: 8px;
  margin-right: 22px;
}
.objects {
  height: 798px;
  flex: none;
  background: #fff;
  border: 1px solid #cdc7c2;
  border-width: 1px 0 1px 1px;
  display: flex;
}
.rows {
  list-style: none;
  margin: 0;
  padding: 1px 0 0;
  flex: 1;
  color: #000;
}
.rows li {
  height: 24px;
  display: flex;
}
.row-main {
  flex: 1;
  display: flex;
  align-items: center;
  padding-left: 43px;
  margin-right: 2px;
  letter-spacing: -.3px;
}
.row-selected {
  background: #3584e4;
}
.ring {
  width: 14px;
  height: 14px;
  margin-right: 7px;
  border: 2px solid #ee4a70;
  border-radius: 50%;
}
.mark {
  width: 4px;
  height: 23px;
  margin-right: 2px;
  background: #ee4a70;
}
.list-scroll {
  width: 16px;
  flex: none;
  background: #cdcdcd;
  padding: 249px 0 0 4px;
}
.list-scroll i {
  width: 8px;
  height: 259px;
  border-radius: 4px;
  background: #7e8282;
}

/* palette + status */
.palette {
  height: 27px;
  flex: none;
  position: relative;
  display: flex;
  align-items: flex-end;
  padding-top: 10px;
}
.no-paint {
  width: 17px;
  height: 17px;
}
.no-paint path {
  stroke: #7a1a1a;
  stroke-width: 1.500;
  fill: none;
}
.swatches {
  display: flex;
  gap: 1px;
  margin-left: 1px;
  height: 16px;
  margin-bottom: 1px;
}
.swatches b {
  display: block;
  width: 16px;
  height: 16px;
}
.pal-up {
  margin: 0 0 9px 9px;
}
.pal-down {
  margin: 0 0 9px 17px;
}
.pal-menu {
  position: absolute;
  right: 1px;
  top: 0;
  width: 19px;
  height: 27px;
  border: 1px solid #cdc7c2;
  border-radius: 5px;
  background: linear-gradient(#f8f7f6, #edebe9);
  display: flex;
  flex-direction: column;
  justify-content: center;
  align-items: center;
  gap: 3px;
}
.pal-menu i {
  width: 14px;
  height: 2px;
  background: #2e3436;
}
.statusbar {
  height: 35px;
  flex: none;
  display: flex;
  align-items: center;
  padding-right: 12.200px;
}
.style-box {
  width: 104px;
  display: grid;
  grid-template-columns: 38px 50px;
  grid-template-rows: 17px 17px;
  column-gap: 16px;
  flex: none;
}
.style-label {
  text-align: right;
  line-height: 17px;
}
.fill-swatch {
  background: #c4a69a;
  border-radius: 3px;
  margin-bottom: 1px;
}
.stroke-swatch {
  background: #0000ff;
  border-radius: 3px;
}
.stroke-width {
  color: #555;
  margin: 17px 0 0 10px;
  width: 35px;
  flex: none;
}
.status-o {
  color: #555;
  width: 13px;
  flex: none;
}
.spin-o {
  width: 71px;
}
.spin-o .spin-val {
  padding-left: 6px;
}
.layer-bar {
  width: 3px;
  height: 20px;
  margin-left: 27px;
  background: #ee4a70;
}
.layer-name {
  margin-left: 6px;
  width: 67px;
  flex: none;
  color: #444;
}
.eye {
  width: 16px;
  height: 16px;
  margin-left: 7px;
}
.layer-lock {
  width: 16px;
  height: 16px;
  margin-left: 22px;
}
.status-sep {
  width: 1px;
  height: 26px;
  margin: 0 7px 0 8px;
  background: #d8d5d1;
}
.message {
  margin: 0;
  flex: 1;
  color: #2e3436;
  white-space: nowrap;
  letter-spacing: -.05px;
}
.coords-sep {
  height: 35px;
  margin: 0 10px 0 0;
}
.coords {
  display: grid;
  grid-template-columns: 23px 38px;
  line-height: 17px;
  width: 61px;
  flex: none;
  color: #555;
  letter-spacing: -.5px;
}
.status-z,
.status-r {
  color: #555;
  flex: none;
}
.status-z {
  width: 14.500px;
}
.spin-z {
  width: 87px;
}
.spin-z .spin-val {
  padding-left: 7px;
}
.status-r {
  width: 15.200px;
  margin-left: 6px;
}
.spin-r {
  width: 93px;
}
.spin-r .spin-val {
  padding-left: 12px;
}
.spin-z .spin-minus,
.spin-r .spin-minus {
  width: 21px;
}
.spin-z .spin-plus,
.spin-r .spin-plus {
  width: 24px;
}
.spin-z .spin-minus::before,
.spin-r .spin-minus::before {
  left: 3px;
}
.spin-z .spin-plus::before,
.spin-r .spin-plus::before {
  left: 4px;
}
.spin-z .spin-plus::after,
.spin-r .spin-plus::after {
  left: 10px;
}
```
